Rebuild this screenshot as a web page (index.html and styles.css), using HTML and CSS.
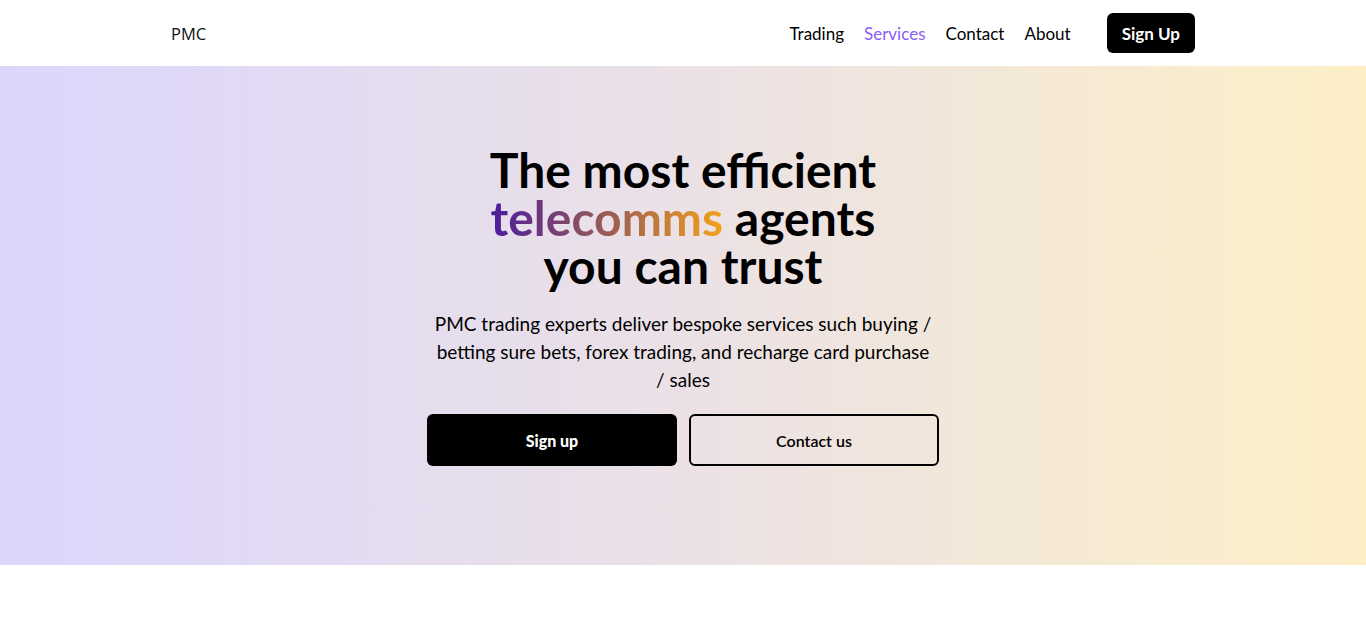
FILE: index.html
```html
<!DOCTYPE html>
<html lang="en">
<head>
<meta charset="utf-8">
<title>PMC</title>
<link rel="stylesheet" href="styles.css">
</head>
<body>
<header class="nav">
  <div class="container nav-inner">
    <a class="logo" href="#">PMC</a>
    <nav class="links">
      <a href="#">Trading</a>
      <a href="#" class="active">Services</a>
      <a href="#">Contact</a>
      <a href="#">About</a>
      <a href="#" class="btn-nav">Sign Up</a>
    </nav>
  </div>
</header>
<section class="hero">
  <div class="hero-inner">
    <h1 class="title">The most efficient<br><span class="grad">telecomms</span> agents<br>you can trust</h1>
    <p class="lead">PMC trading experts deliver bespoke services such buying / betting sure bets, forex trading, and recharge card purchase / sales</p>
    <div class="actions">
      <a href="#" class="btn btn-dark">Sign up</a>
      <a href="#" class="btn btn-outline">Contact us</a>
    </div>
  </div>
</section>
</body>
</html>
```

FILE: styles.css
```css
* { box-sizing: border-box; }
html, body { margin: 0; padding: 0; }
body {
  font-family: "Lato", "Noto Sans", sans-serif;
  color: #000;
  background: #fff;
}
a { text-decoration: none; color: inherit; }
.container { max-width: 1024px; margin: 0 auto; }
.nav { height: 66px; background: #fff; }
.nav-inner {
  height: 66px;
  display: flex;
  align-items: center;
  justify-content: space-between;
}
.logo {
  font-family: "Open Sans", sans-serif;
  font-size: 16.5px;
  color: #111;
}
.links { display: flex; align-items: center; gap: 20px; font-size: 17px; }
.links .active { color: #8b5cf6; }
.btn-nav {
  margin-left: 16px;
  background: #000;
  color: #fff;
  font-weight: 700;
  height: 40px;
  padding: 0 15px;
  border-radius: 6px;
  display: flex;
  align-items: center;
}
.hero {
  height: 499px;
  background: linear-gradient(90deg, #dcd6fd 0%, #ebe1e6 50%, #fdf0c7 100%);
  display: flex;
  justify-content: center;
}
.hero-inner {
  padding-top: 80px;
  display: flex;
  flex-direction: column;
  align-items: center;
  text-align: center;
}
.title {
  margin: 0;
  font-size: 48px;
  line-height: 48px;
  font-weight: 700;
}
.grad {
  background: linear-gradient(90deg, #4a1c9c 0%, #a2624e 55%, #f3a21b 100%);
  -webkit-background-clip: text;
  background-clip: text;
  color: transparent;
}
.lead {
  margin: 20px 0 0;
  max-width: 502px;
  font-size: 19px;
  line-height: 28px;
}
.actions { display: flex; gap: 12px; margin-top: 20px; }
.btn {
  width: 250px;
  height: 52px;
  border-radius: 6px;
  display: flex;
  align-items: center;
  justify-content: center;
  font-size: 16px;
  font-weight: 700;
}
.btn-dark { background: #000; color: #fff; font-weight: 900; }
.btn-outline { border: 2px solid #000; color: #000; font-weight: 600; }
```
